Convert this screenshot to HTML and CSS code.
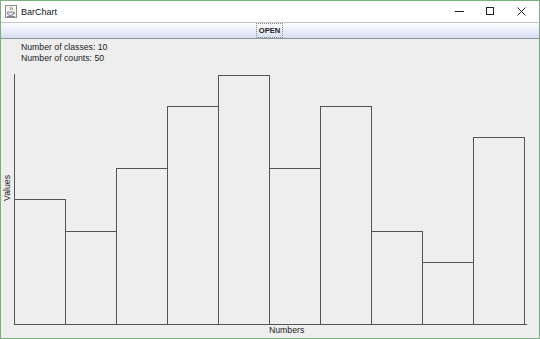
FILE: index.html
```html
<!DOCTYPE html>
<html lang="en">
<head>
  <meta charset="UTF-8" />
  <title>BarChart</title>
  <link rel="stylesheet" href="styles.css">
</head>
<body>
  <div class="janela">
    <div class="titulo">
      <svg class="icone" width="12" height="13" viewBox="0 0 12 13">
        <rect x="0.5" y="0.5" width="11" height="12" fill="#f4f4f4" stroke="#8a8a8a"/>
        <path d="M5 2 q1.5 1.5 0 3 M7 2.5 q1.2 1.2 0 2.5" stroke="#9a7a6a" fill="none"/>
        <path d="M2.5 7 h6 v1.5 q0 2 -3 2 q-3 0 -3 -2 z M8.5 7.5 q1.8 0 1 1.5" stroke="#6a6a8a" fill="#dcdce8" stroke-width="0.8"/>
        <path d="M2 11.5 h8" stroke="#6a6a8a" stroke-width="0.8"/>
      </svg>
      <span class="nome">BarChart</span>
      <div class="botoes">
        <svg width="30" height="21" viewBox="0 0 30 21"><path d="M10 10.5 h9" stroke="#222" stroke-width="1"/></svg>
        <svg width="30" height="21" viewBox="0 0 30 21"><rect x="10.5" y="6.5" width="7" height="7" fill="none" stroke="#222"/></svg>
        <svg width="30" height="21" viewBox="0 0 30 21"><path d="M10.5 6.5 l8 8 M18.5 6.5 l-8 8" stroke="#222" stroke-width="1"/></svg>
      </div>
    </div>

    <div class="barra">
      <button class="abrir">OPEN</button>
    </div>

    <div class="conteudo">
      <div class="info">
        <p>Number of classes: 10</p>
        <p>Number of counts: 50</p>
      </div>

      <div class="grafico">
        <div class="rotuloY">Values</div>
        <div class="area">
          <div class="coluna" style="height: 125px"></div>
          <div class="coluna" style="height: 93px"></div>
          <div class="coluna" style="height: 156px"></div>
          <div class="coluna" style="height: 218px"></div>
          <div class="coluna" style="height: 249px"></div>
          <div class="coluna" style="height: 156px"></div>
          <div class="coluna" style="height: 218px"></div>
          <div class="coluna" style="height: 93px"></div>
          <div class="coluna" style="height: 62px"></div>
          <div class="coluna" style="height: 187px"></div>
        </div>
        <div class="rotuloX">Numbers</div>
      </div>
    </div>
  </div>
</body>
</html>
```

FILE: styles.css
```css
html, body {
  margin: 0;
  padding: 0;
}

body {
  width: 540px;
  height: 339px;
  font-family: 'Liberation Sans', Arial, sans-serif;
  color: #222;
}

.janela {
  box-sizing: border-box;
  width: 540px;
  height: 339px;
  border: 1px solid #76b27a;
  display: flex;
  flex-direction: column;
  background-color: #eeeeee;
}

.titulo {
  height: 21px;
  background-color: #fff;
  display: flex;
  align-items: center;
}

.icone {
  margin-left: 4px;
  margin-right: 4px;
}

.nome {
  font-size: 9px;
  color: #111;
}

.botoes {
  margin-left: auto;
  display: flex;
  gap: 1px;
  margin-right: 2px;
}

.barra {
  height: 15px;
  border-top: 1px solid #c3c7cf;
  border-bottom: 1px solid #8d939c;
  background: linear-gradient(#fdfdff, #d6def1);
  display: flex;
  justify-content: center;
}

.abrir {
  font-family: 'Liberation Sans', Arial, sans-serif;
  font-size: 7.6px;
  font-weight: bold;
  color: #222;
  background: transparent;
  border: 1px dotted #8a8a8a;
  padding: 0 2px;
  margin: 0 0 0 -1px;
  height: 15px;
  line-height: 13px;
}

.conteudo {
  flex: 1;
  display: flex;
  flex-direction: column;
}

.info {
  padding: 3px 0 0 20px;
  font-size: 8.7px;
  line-height: 11px;
  color: #222;
}

.info p {
  margin: 0;
}

.grafico {
  margin-top: 10px;
  display: grid;
  grid-template-columns: 13px 513px;
  grid-template-rows: 251px 11px;
}

.rotuloY {
  writing-mode: vertical-rl;
  transform: rotate(180deg);
  font-size: 8.7px;
  line-height: 11px;
  align-self: center;
  justify-self: center;
  margin-bottom: 24px;
}

.area {
  box-sizing: border-box;
  border-left: 1px solid #555;
  border-bottom: 1px solid #555;
  display: flex;
  align-items: flex-end;
}

.coluna {
  box-sizing: border-box;
  width: 52px;
  margin-left: -1px;
  border: 1px solid #555;
  border-bottom: none;
}

.rotuloX {
  grid-column: 2;
  font-size: 8.7px;
  line-height: 11px;
  margin-left: 255px;
}
```
